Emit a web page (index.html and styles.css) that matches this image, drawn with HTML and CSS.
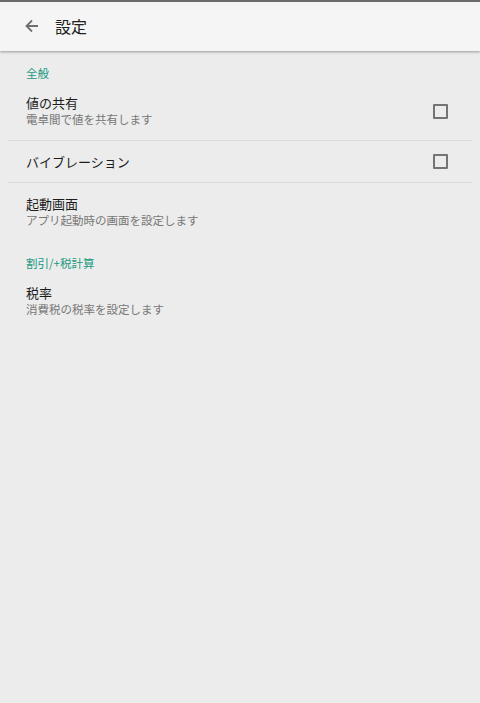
FILE: index.html
```html
<!DOCTYPE html>
<html lang="ja">
<head>
<meta charset="utf-8">
<link rel="stylesheet" href="styles.css">
</head>
<body>
<div class="topline"></div>
<header class="appbar">
  <svg class="back" width="16" height="16" viewBox="0 0 16 16"><path d="M14 8H2.5M8 2.5L2.5 8L8 13.5" fill="none" stroke="#6f6f6f" stroke-width="1.8"/></svg>
  <span class="title">設定</span>
</header>
<main class="content">
  <div class="category first">全般</div>
  <div class="item">
    <div class="texts">
      <div class="item-title">値の共有</div>
      <div class="item-sub">電卓間で値を共有します</div>
    </div>
    <span class="checkbox"></span>
  </div>
  <div class="divider"></div>
  <div class="item">
    <div class="texts">
      <div class="item-title">バイブレーション</div>
    </div>
    <span class="checkbox"></span>
  </div>
  <div class="divider"></div>
  <div class="item">
    <div class="texts">
      <div class="item-title">起動画面</div>
      <div class="item-sub">アプリ起動時の画面を設定します</div>
    </div>
  </div>
  <div class="category">割引/+税計算</div>
  <div class="item">
    <div class="texts">
      <div class="item-title">税率</div>
      <div class="item-sub">消費税の税率を設定します</div>
    </div>
  </div>
</main>
</body>
</html>
```

FILE: styles.css
```css
html, body {
  margin: 0;
  padding: 0;
  height: 100%;
}
body {
  background: #ececec;
  font-family: "Noto Sans CJK JP", "Noto Sans", Roboto, sans-serif;
  color: #212121;
}
.topline {
  height: 2px;
  background: #6c6c6c;
}
.appbar {
  position: relative;
  z-index: 1;
  height: 49px;
  background: #f5f5f5;
  display: flex;
  align-items: center;
  box-shadow: 0 1px 2px rgba(0,0,0,0.25), 0 2px 3px rgba(0,0,0,0.08);
}
.back {
  margin-left: 24px;
  margin-right: 15px;
  margin-top: -1px;
}
.title {
  font-size: 16px;
  color: #212121;
  margin-top: -1px;
}
.content {
  display: flex;
  flex-direction: column;
}
.category {
  padding: 14px 26px 1px;
  line-height: 16px;
  font-size: 11.5px;
  color: #1a9a80;
}
.item {
  display: flex;
  align-items: center;
  padding: 12px 32px 12px 26px;
}
.texts {
  flex: 1;
}
.item-title {
  font-size: 13px;
  line-height: 17px;
  color: #1c1c1c;
}
.item-sub {
  font-size: 11.5px;
  line-height: 17px;
  color: #777777;
}
.checkbox {
  width: 11px;
  height: 11px;
  border: 2px solid #747474;
  border-radius: 1px;
}
.divider {
  height: 1px;
  background: #dadada;
  margin: 0 8px;
}
```
